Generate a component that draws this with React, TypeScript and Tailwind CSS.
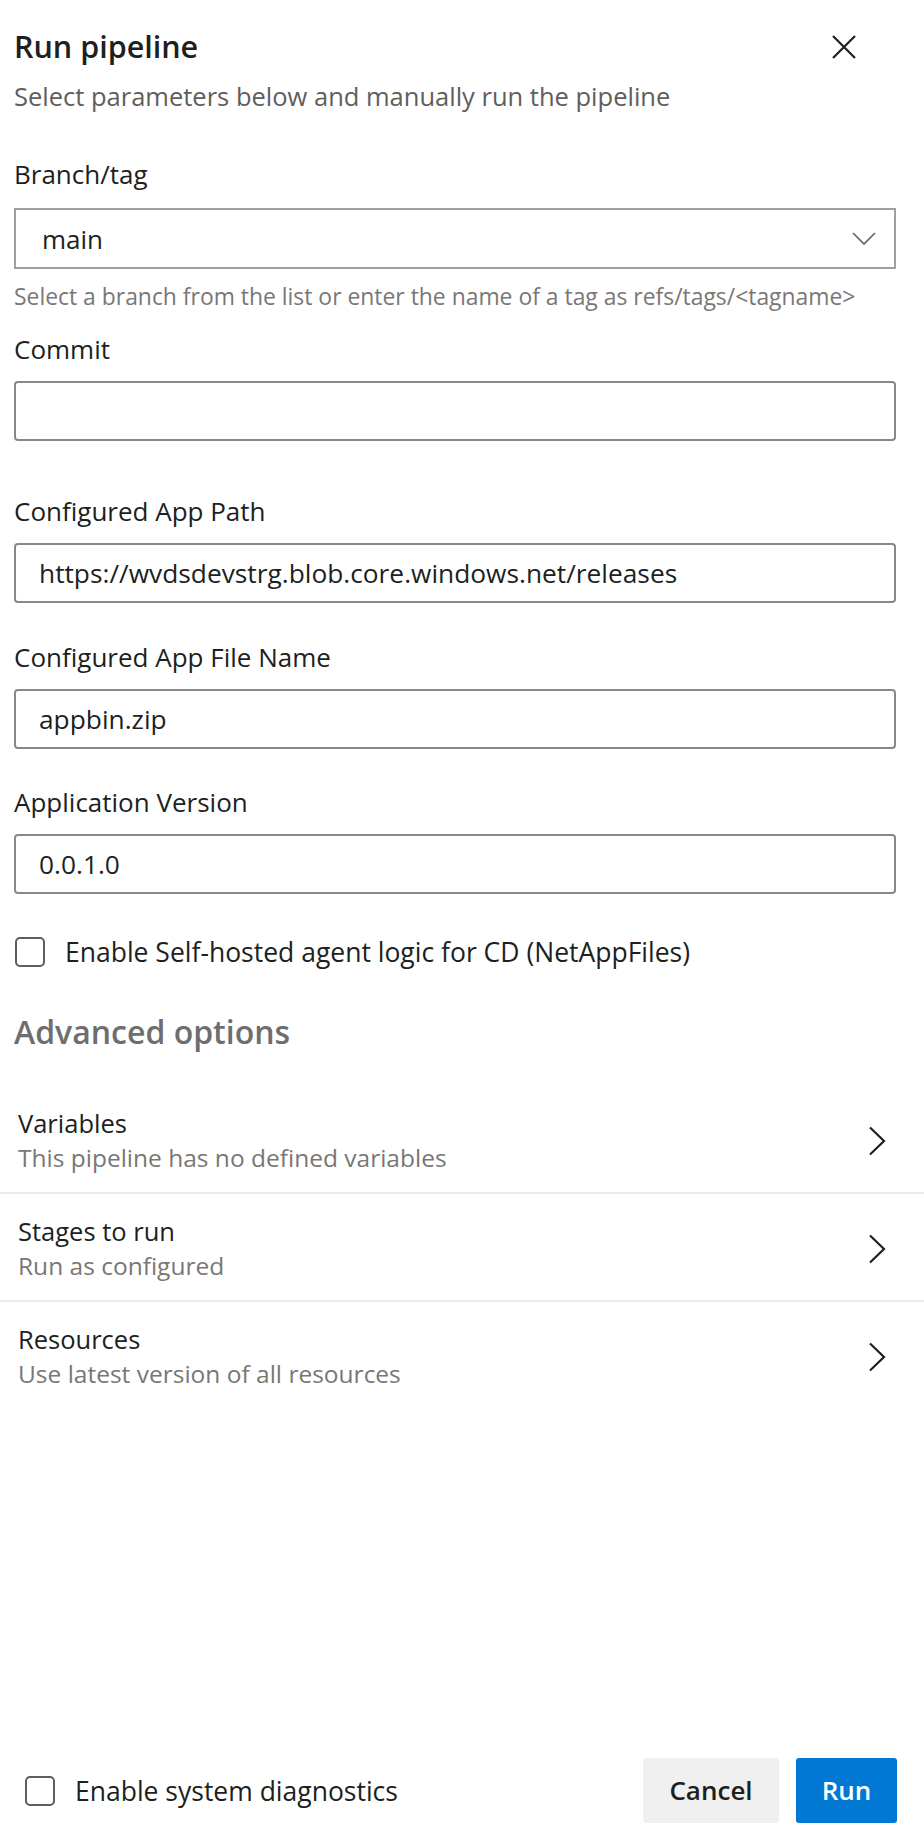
import React from 'react';

const font = "font-['Open_Sans',_'Noto_Sans',_sans-serif]";

function TextField({ label, value }: { label: string; value?: string }) {
  return (
    <div className="flex flex-col">
      <label className="text-[26px] leading-[32px] text-[#201f1e]">{label}</label>
      <div className="mt-[16px] flex h-[60px] items-center rounded-[4px] border-2 border-[#8a8886] px-[23px] text-[26.3px] leading-[32px] text-[#201f1e]">
        {value}
      </div>
    </div>
  );
}

function Checkbox({ label, className = '' }: { label: string; className?: string }) {
  return (
    <label className={`flex items-center gap-[20px] ${className}`}>
      <span className="h-[30px] w-[30px] shrink-0 rounded-[5px] border-2 border-[#605e5c] bg-white" />
      <span className="text-[26.5px] leading-[32px] text-[#201f1e]">{label}</span>
    </label>
  );
}

function OptionRow({ title, subtitle, last }: { title: string; subtitle: string; last?: boolean }) {
  return (
    <div className={`flex items-center justify-between pl-[18px] pr-[38px] pt-[21px] pb-[18px] ${last ? '' : 'border-b-2 border-[#edebe9]'}`}>
      <div className="flex flex-col gap-[3px]">
        <span className="text-[25.5px] leading-[32px] text-[#201f1e]">{title}</span>
        <span className="text-[24.5px] leading-[32px] text-[#797775]">{subtitle}</span>
      </div>
      <svg width="18" height="30" viewBox="0 0 18 30" fill="none" className="text-[#201f1e]">
        <path d="M2 1.5 L16 15 L2 28.5" stroke="currentColor" strokeWidth="2.2" />
      </svg>
    </div>
  );
}

export default function App() {
  return (
    <div className={`flex min-h-screen flex-col bg-white ${font}`}>
      <div className="px-[14px] pt-[28px] pr-[28px]">
        <div className="flex items-start justify-between">
          <h1 className="text-[30.5px] font-semibold leading-[36px] text-[#201f1e]">Run pipeline</h1>
          <button className="mr-[39px] mt-[6px] flex h-[26px] w-[26px] items-center justify-center text-[#201f1e]">
            <svg width="24" height="24" viewBox="0 0 24 24" fill="none">
              <path d="M1 1 L23 23 M23 1 L1 23" stroke="currentColor" strokeWidth="2.2" />
            </svg>
          </button>
        </div>
        <p className="mt-[16px] text-[25.5px] leading-[32px] text-[#605e5c]">
          Select parameters below and manually run the pipeline
        </p>

        <div className="mt-[46px] flex flex-col">
          <label className="text-[26px] leading-[32px] text-[#201f1e]">Branch/tag</label>
          <div className="mt-[18px] flex h-[61px] items-center justify-between border-2 border-[#a19f9d] pl-[26px] pr-[18px]">
            <span className="text-[26px] leading-[32px] text-[#201f1e]">main</span>
            <svg width="24" height="13" viewBox="0 0 24 13" fill="none" className="text-[#605e5c]">
              <path d="M1 1 L12 12 L23 1" stroke="currentColor" strokeWidth="1.6" />
            </svg>
          </div>
          <p className="mt-[14px] text-[22.9px] leading-[28px] text-[#797775]">
            Select a branch from the list or enter the name of a tag as refs/tags/&lt;tagname&gt;
          </p>
        </div>

        <div className="mt-[22px]">
          <TextField label="Commit" />
        </div>
        <div className="mt-[54px]">
          <TextField label="Configured App Path" value="https://wvdsdevstrg.blob.core.windows.net/releases" />
        </div>
        <div className="mt-[38px]">
          <TextField label="Configured App File Name" value="appbin.zip" />
        </div>
        <div className="mt-[37px]">
          <TextField label="Application Version" value="0.0.1.0" />
        </div>

        <Checkbox label="Enable Self-hosted agent logic for CD (NetAppFiles)" className="mt-[42px] pl-[1px]" />

        <h2 className="mt-[44px] text-[32px] font-semibold leading-[40px] text-[#6e6e6e]">Advanced options</h2>
      </div>

      <div className="mt-[34px] flex flex-col">
        <OptionRow title="Variables" subtitle="This pipeline has no defined variables" />
        <OptionRow title="Stages to run" subtitle="Run as configured" />
        <OptionRow title="Resources" subtitle="Use latest version of all resources" last />
      </div>

      <div className="mt-auto flex items-center justify-between pl-[25px] pr-[27px] pb-[18px]">
        <Checkbox label="Enable system diagnostics" />
        <div className="flex gap-[17px]">
          <button className="h-[65px] w-[136px] rounded-[3px] bg-[#f0f0f0] text-[26px] font-semibold text-[#201f1e]">
            Cancel
          </button>
          <button className="h-[65px] w-[101px] rounded-[3px] bg-[#0078d4] text-[26px] font-semibold text-white">
            Run
          </button>
        </div>
      </div>
    </div>
  );
}
